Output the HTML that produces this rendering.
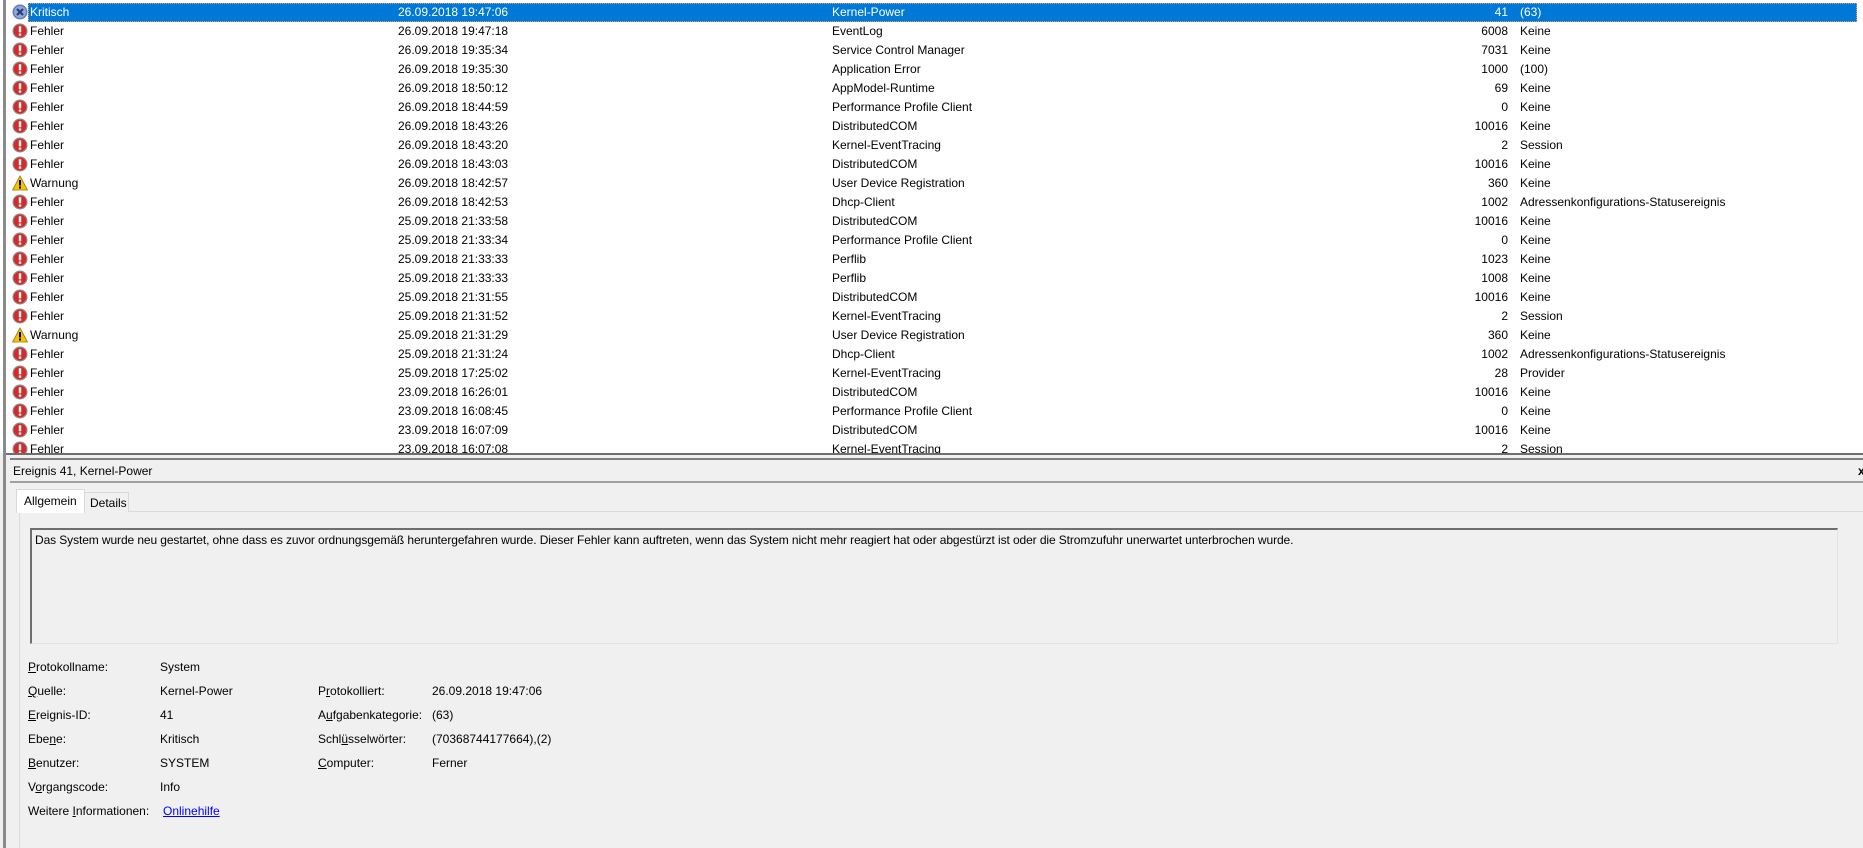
<!DOCTYPE html>
<html><head><meta charset="utf-8"><style>
*{margin:0;padding:0;box-sizing:border-box}
body{width:1863px;height:848px;overflow:hidden;background:#f0f0f0;font-family:"Liberation Sans",sans-serif;font-size:12px;color:#000;position:relative}
.list{position:absolute;left:0;top:0;width:1863px;height:453px;background:#fff;overflow:hidden}
.lbar{position:absolute;left:3px;top:0;width:3px;height:848px;background:#8a8a8a}
.row{position:absolute;left:0;height:19px;width:1863px;line-height:19px;white-space:nowrap}
.row span{position:absolute}
.sel{position:absolute;left:28px;top:0;width:1829px;height:19px;background:#0078d7;border:1px dotted #e8a060}
.row.s span{color:#fff}
.ic{position:absolute;left:12px;top:1px;width:16px;height:16px}
.c1{left:30px}.c2{left:398px}.c3{left:832px}.c4{right:355px;text-align:right}.c5{left:1520px}
.abs{position:absolute;white-space:nowrap}
u{text-decoration:underline}
</style></head><body>
<div class="list">
<div class="row s" style="top:3px"><div class="sel"></div>
<svg class="ic" viewBox="0 0 16 16"><circle cx="8" cy="8" r="7.5" fill="#5f7fb8"/><circle cx="8" cy="8" r="6" fill="#8fa8d8"/><path d="M5 5L11 11M11 5L5 11" stroke="#2a3f7a" stroke-width="2.2"/></svg>
<span class="c1">Kritisch</span><span class="c2">26.09.2018 19:47:06</span><span class="c3">Kernel-Power</span><span class="c4">41</span><span class="c5">(63)</span></div>
</div>
<div class="lbar"></div>
<div class="abs" style="left:6px;top:453px;width:1857px;height:2px;background:#6e6e6e"></div>
<div class="abs" style="left:10px;top:458px;width:1853px;height:2px;background:#808080"></div>
<div class="abs" style="left:13px;top:463px;line-height:17px">Ereignis 41, Kernel-Power</div>
<div class="abs" style="left:1858px;top:463px;font-weight:bold;line-height:17px">x</div>
<div class="abs" style="left:10px;top:481px;width:1853px;height:2px;background:#a0a0a0"></div>
<div class="abs" style="left:19px;top:511px;width:1844px;height:337px;background:#f0f0f0;border-top:1px solid #dadada;border-left:1px solid #dadada"></div>
<div class="abs" style="left:16px;top:489px;width:69px;height:24px;background:#fff;border:1px solid #d9d9d9;border-bottom:none;padding:4px 0 0 7px">Allgemein</div>
<div class="abs" style="left:84px;top:492px;width:45px;height:20px;background:#f0f0f0;border:1px solid #d9d9d9;border-bottom:none;padding:3px 0 0 5px">Details</div>
<div class="abs" style="left:30px;top:528px;width:1808px;height:116px;border-top:2px solid #6e6e6e;border-left:2px solid #6e6e6e;border-right:1px solid #e3e3e3;border-bottom:1px solid #e3e3e3;padding:2px 0 0 3px;line-height:16px;letter-spacing:-0.1px">Das System wurde neu gestartet, ohne dass es zuvor ordnungsgemäß heruntergefahren wurde. Dieser Fehler kann auftreten, wenn das System nicht mehr reagiert hat oder abgestürzt ist oder die Stromzufuhr unerwartet unterbrochen wurde.</div>
<div class="abs" style="left:28px;top:660px"><u>P</u>rotokollname:</div><div class="abs" style="left:160px;top:660px">System</div>
<div class="abs" style="left:28px;top:684px"><u>Q</u>uelle:</div><div class="abs" style="left:160px;top:684px">Kernel-Power</div>
<div class="abs" style="left:318px;top:684px">P<u>r</u>otokolliert:</div><div class="abs" style="left:432px;top:684px">26.09.2018 19:47:06</div>
<div class="abs" style="left:28px;top:708px"><u>E</u>reignis-ID:</div><div class="abs" style="left:160px;top:708px">41</div>
<div class="abs" style="left:318px;top:708px">A<u>u</u>fgabenkategorie:</div><div class="abs" style="left:432px;top:708px">(63)</div>
<div class="abs" style="left:28px;top:732px">Ebe<u>n</u>e:</div><div class="abs" style="left:160px;top:732px">Kritisch</div>
<div class="abs" style="left:318px;top:732px">Schl<u>ü</u>sselwörter:</div><div class="abs" style="left:432px;top:732px">(70368744177664),(2)</div>
<div class="abs" style="left:28px;top:756px"><u>B</u>enutzer:</div><div class="abs" style="left:160px;top:756px">SYSTEM</div>
<div class="abs" style="left:318px;top:756px"><u>C</u>omputer:</div><div class="abs" style="left:432px;top:756px">Ferner</div>
<div class="abs" style="left:28px;top:780px">V<u>o</u>rgangscode:</div><div class="abs" style="left:160px;top:780px">Info</div>
<div class="abs" style="left:28px;top:804px">Weitere <u>I</u>nformationen:</div><div class="abs" style="left:163px;top:804px;color:#00f;text-decoration:underline">Onlinehilfe</div>
<script>
var d=[
["F","Fehler","26.09.2018 19:47:18","EventLog","6008","Keine"],
["F","Fehler","26.09.2018 19:35:34","Service Control Manager","7031","Keine"],
["F","Fehler","26.09.2018 19:35:30","Application Error","1000","(100)"],
["F","Fehler","26.09.2018 18:50:12","AppModel-Runtime","69","Keine"],
["F","Fehler","26.09.2018 18:44:59","Performance Profile Client","0","Keine"],
["F","Fehler","26.09.2018 18:43:26","DistributedCOM","10016","Keine"],
["F","Fehler","26.09.2018 18:43:20","Kernel-EventTracing","2","Session"],
["F","Fehler","26.09.2018 18:43:03","DistributedCOM","10016","Keine"],
["W","Warnung","26.09.2018 18:42:57","User Device Registration","360","Keine"],
["F","Fehler","26.09.2018 18:42:53","Dhcp-Client","1002","Adressenkonfigurations-Statusereignis"],
["F","Fehler","25.09.2018 21:33:58","DistributedCOM","10016","Keine"],
["F","Fehler","25.09.2018 21:33:34","Performance Profile Client","0","Keine"],
["F","Fehler","25.09.2018 21:33:33","Perflib","1023","Keine"],
["F","Fehler","25.09.2018 21:33:33","Perflib","1008","Keine"],
["F","Fehler","25.09.2018 21:31:55","DistributedCOM","10016","Keine"],
["F","Fehler","25.09.2018 21:31:52","Kernel-EventTracing","2","Session"],
["W","Warnung","25.09.2018 21:31:29","User Device Registration","360","Keine"],
["F","Fehler","25.09.2018 21:31:24","Dhcp-Client","1002","Adressenkonfigurations-Statusereignis"],
["F","Fehler","25.09.2018 17:25:02","Kernel-EventTracing","28","Provider"],
["F","Fehler","23.09.2018 16:26:01","DistributedCOM","10016","Keine"],
["F","Fehler","23.09.2018 16:08:45","Performance Profile Client","0","Keine"],
["F","Fehler","23.09.2018 16:07:09","DistributedCOM","10016","Keine"],
["F","Fehler","23.09.2018 16:07:08","Kernel-EventTracing","2","Session"]];
var E='<svg class="ic" viewBox="0 0 16 16"><circle cx="8" cy="8" r="7.5" fill="#8a8a8a"/><circle cx="8" cy="8" r="6.3" fill="#d42a2a"/><rect x="6.8" y="3.3" width="2.4" height="6" fill="#fff"/><rect x="6.8" y="10.5" width="2.4" height="2.2" fill="#fff"/></svg>';
var W='<svg class="ic" viewBox="0 0 16 16"><path d="M8 1L15.5 15H0.5Z" fill="#f5c400" stroke="#a07800" stroke-width="0.8"/><rect x="7" y="5" width="2" height="5.5" fill="#000"/><rect x="7" y="11.5" width="2" height="2" fill="#000"/></svg>';
var h='';
for(var i=0;i<d.length;i++){var r=d[i];
h+='<div class="row" style="top:'+(22+19*i)+'px">'+(r[0]=="F"?E:W)+'<span class="c1">'+r[1]+'</span><span class="c2">'+r[2]+'</span><span class="c3">'+r[3]+'</span><span class="c4">'+r[4]+'</span><span class="c5">'+r[5]+'</span></div>';}
document.querySelector('.list').insertAdjacentHTML('beforeend',h);
</script>
</body></html>
